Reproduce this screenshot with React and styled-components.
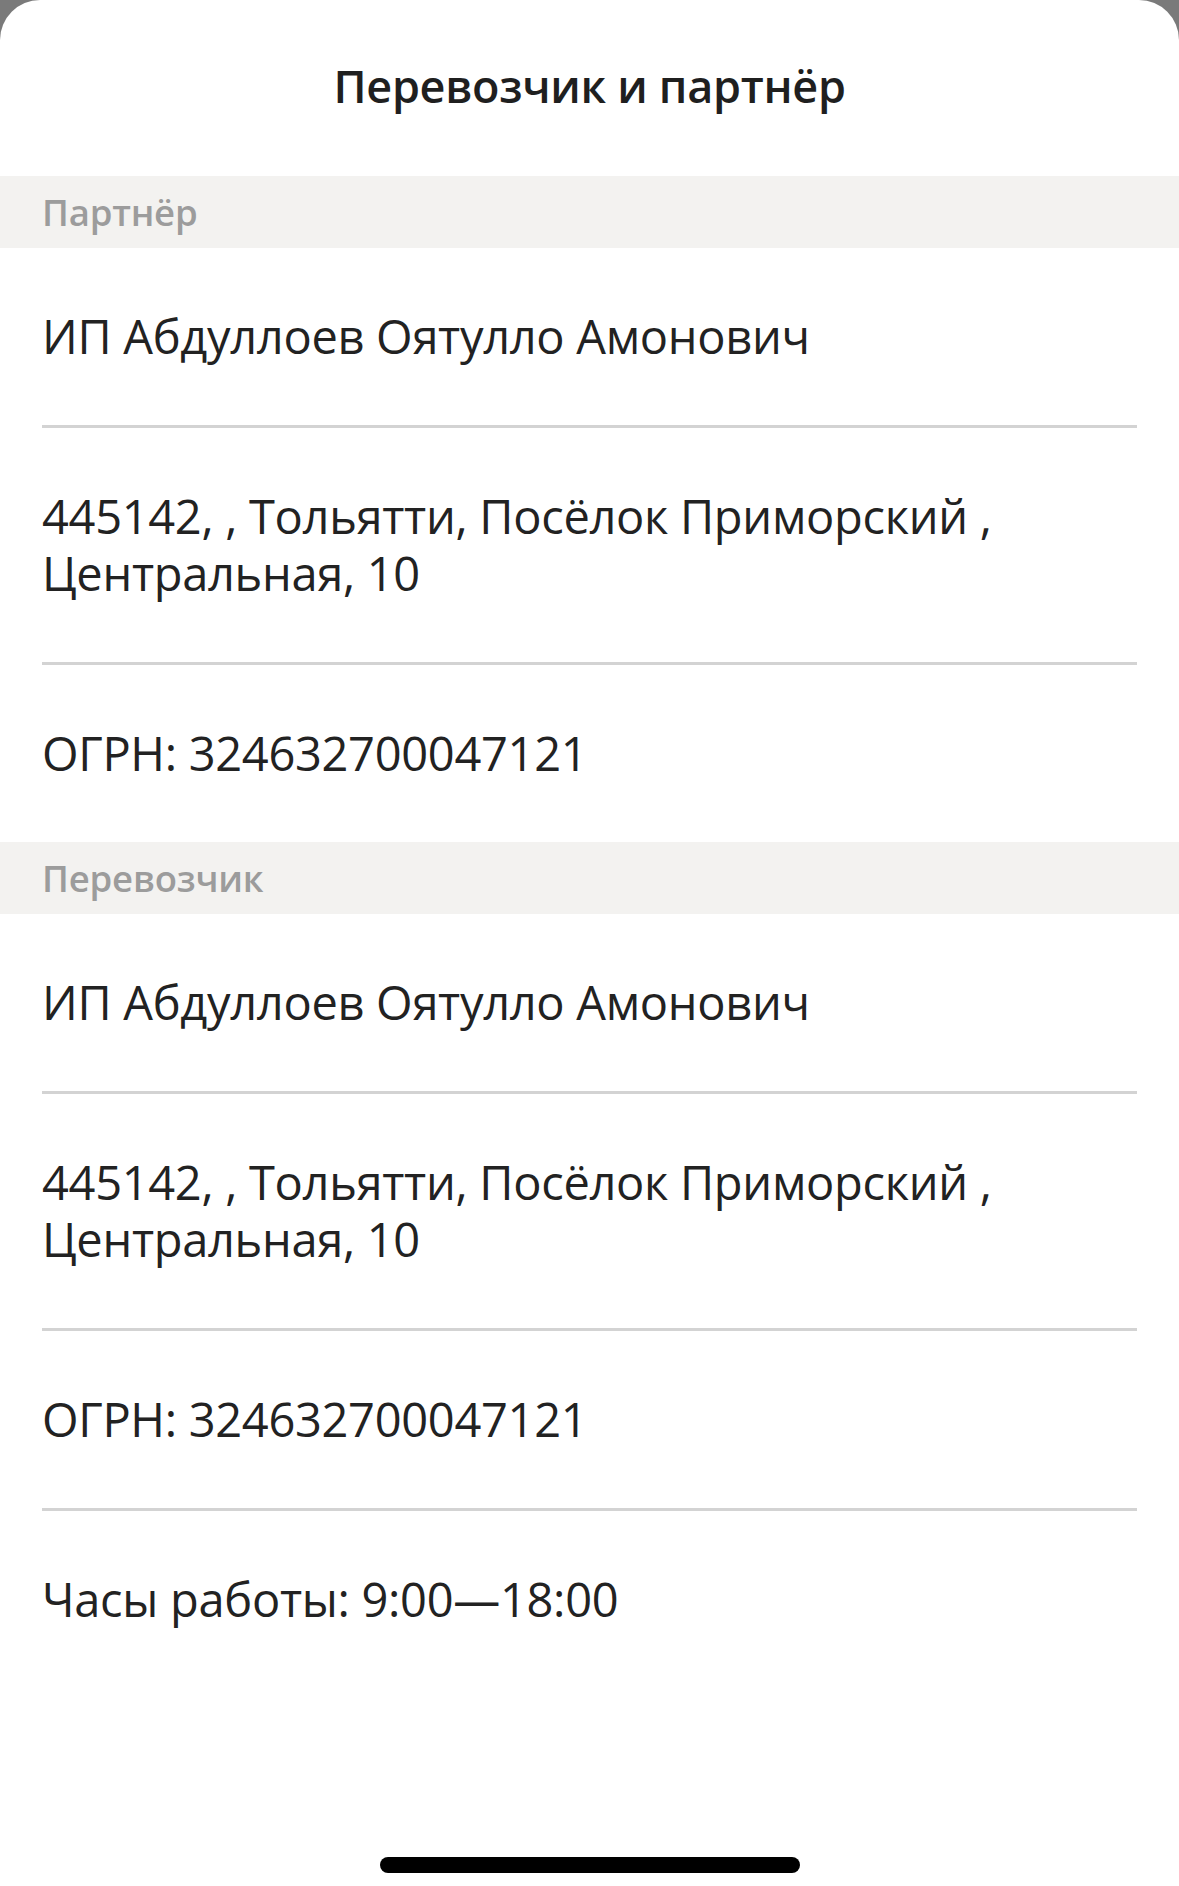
import React from "react";
import styled, { createGlobalStyle } from "styled-components";

const Global = createGlobalStyle`
  html, body {
    margin: 0;
    padding: 0;
    background: #7a7a7a;
  }
  * { box-sizing: border-box; }
`;

const Sheet = styled.div`
  position: relative;
  width: 1179px;
  height: 1886px;
  background: #ffffff;
  border-radius: 40px 40px 0 0;
  overflow: hidden;
  font-family: "Open Sans", "Noto Sans", sans-serif;
  color: #222222;
  display: flex;
  flex-direction: column;
`;

const Header = styled.header`
  height: 176px;
  display: flex;
  align-items: center;
  justify-content: center;
  padding-bottom: 6px;
`;

const Title = styled.h1`
  margin: 0;
  font-size: 45px;
  font-weight: 600;
  letter-spacing: -0.3px;
  color: #1f1f1f;
`;

const SectionBar = styled.div`
  height: 72px;
  background: #f3f2f0;
  display: flex;
  align-items: center;
  padding: 0 42px;
`;

const SectionLabel = styled.span`
  font-size: 36.5px;
  font-weight: 600;
  color: #9c9c9c;
  letter-spacing: -0.2px;
`;

const List = styled.div`
  display: flex;
  flex-direction: column;
`;

const Row = styled.div`
  margin: 0 42px;
  padding: 60px 0;
  font-size: 47px;
  line-height: 57px;
  letter-spacing: -0.3px;
  color: #222222;
  border-bottom: ${(p) => (p.$last ? "none" : "3px solid #d3d3d3")};
`;

const HomeIndicator = styled.div`
  position: absolute;
  left: 380px;
  top: 1857px;
  width: 420px;
  height: 16px;
  border-radius: 8px;
  background: #000000;
`;

const address = (
  <>
    445142, , Тольятти, Посёлок Приморский ,
    <br />
    Центральная, 10
  </>
);

const sections = [
  {
    title: "Партнёр",
    rows: [
      "ИП Абдуллоев Оятулло Амонович",
      address,
      "ОГРН: 324632700047121",
    ],
  },
  {
    title: "Перевозчик",
    rows: [
      "ИП Абдуллоев Оятулло Амонович",
      address,
      "ОГРН: 324632700047121",
      "Часы работы: 9:00—18:00",
    ],
  },
];

export default function App() {
  return (
    <>
      <Global />
      <Sheet>
        <Header>
          <Title>Перевозчик и партнёр</Title>
        </Header>
        {sections.map((s) => (
          <section key={s.title}>
            <SectionBar>
              <SectionLabel>{s.title}</SectionLabel>
            </SectionBar>
            <List>
              {s.rows.map((r, i) => (
                <Row key={i} $last={i === s.rows.length - 1}>
                  {r}
                </Row>
              ))}
            </List>
          </section>
        ))}
        <HomeIndicator />
      </Sheet>
    </>
  );
}
